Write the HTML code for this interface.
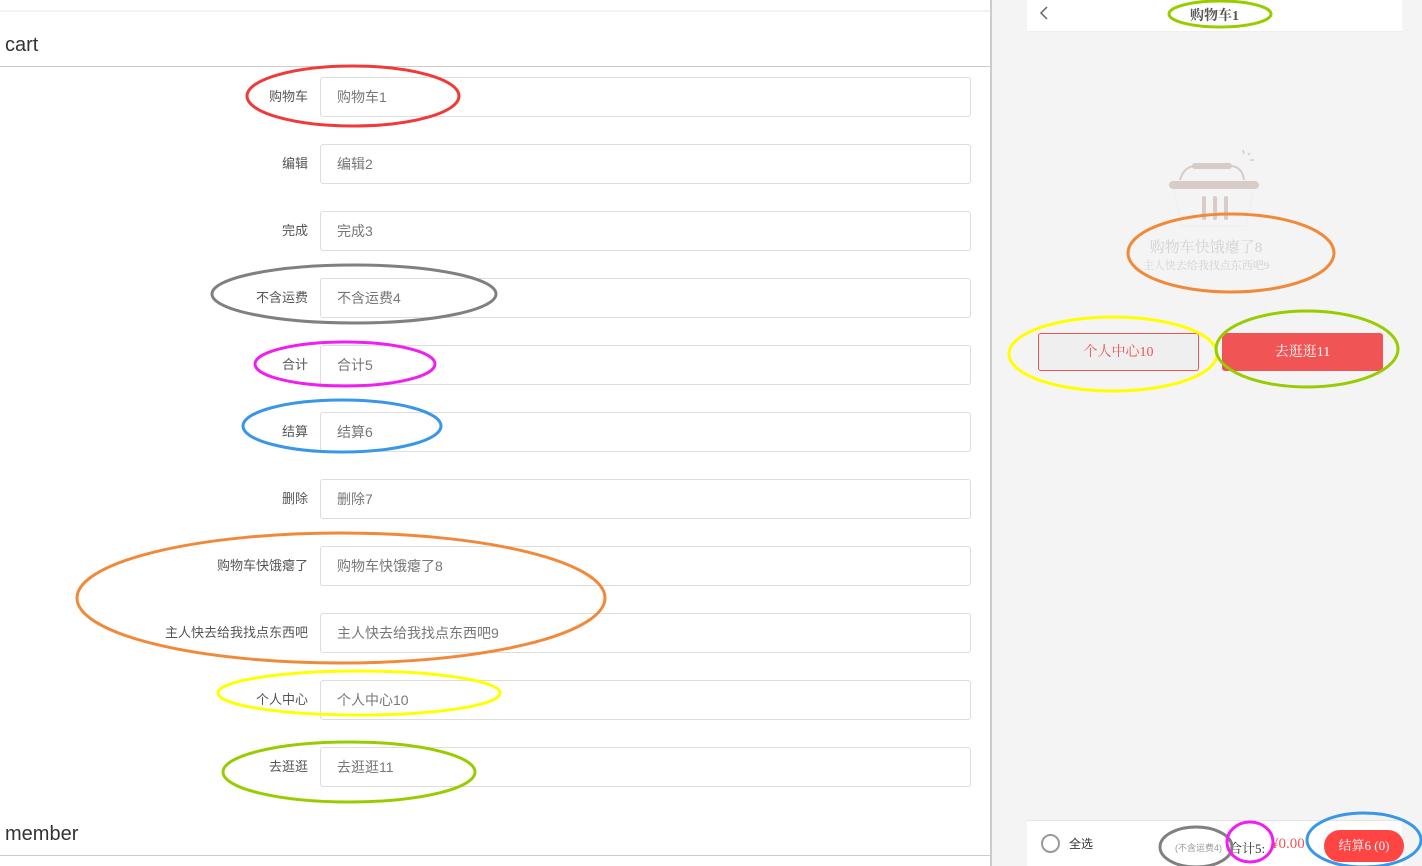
<!DOCTYPE html>
<html><head><meta charset="utf-8"><style>
*{margin:0;padding:0;box-sizing:border-box}
body{width:1422px;height:866px;overflow:hidden;background:#fff;font-family:"Liberation Sans","Noto Sans CJK SC",sans-serif;position:relative}
.topline{position:absolute;left:0;top:10px;width:990px;height:2px;background:#f2f2f2}
.h{position:absolute;left:5px;font-size:20px;color:#333}
.hr{position:absolute;left:0;width:990px;height:1px;background:#ccc}
.lbl{position:absolute;right:1114px;font-size:13px;color:#555;line-height:40px;white-space:nowrap}
.inp{position:absolute;left:320px;width:651px;height:40px;border:1px solid #ddd;border-radius:3px;font-size:14px;color:#777;line-height:38px;padding-left:16px}
.right{position:absolute;left:990px;top:0;width:432px;height:866px;background:#f4f4f4;border-left:2px solid #ccc}
.nav{position:absolute;left:35px;top:0;width:375px;height:32px;background:#fff;border-bottom:1px solid #eee}
.title{position:absolute;left:0;width:375px;top:5px;text-align:center;font-family:"Liberation Serif","Noto Serif CJK SC",serif;font-weight:bold;font-size:14px;color:#555}
.t1{position:absolute;width:432px;left:0;text-align:center;font-family:"Liberation Serif","Noto Serif CJK SC",serif;color:#d2d2d2}
.btn{position:absolute;top:333px;height:38px;border-radius:3px;font-family:"Liberation Serif","Noto Serif CJK SC",serif;font-size:14px;line-height:40px;text-align:center}
.foot{position:absolute;left:35px;top:820px;width:375px;height:46px;background:#fff;border-top:1px solid #e5e5e5}
svg.ov{position:absolute;left:0;top:0}
</style></head><body>
<div class="topline"></div>
<div class="h" style="top:34px">cart</div>
<div class="hr" style="top:66px"></div>
<div class="lbl" style="top:77px">购物车</div><div class="inp" style="top:77px">购物车1</div>
<div class="lbl" style="top:144px">编辑</div><div class="inp" style="top:144px">编辑2</div>
<div class="lbl" style="top:211px">完成</div><div class="inp" style="top:211px">完成3</div>
<div class="lbl" style="top:278px">不含运费</div><div class="inp" style="top:278px">不含运费4</div>
<div class="lbl" style="top:345px">合计</div><div class="inp" style="top:345px">合计5</div>
<div class="lbl" style="top:412px">结算</div><div class="inp" style="top:412px">结算6</div>
<div class="lbl" style="top:479px">删除</div><div class="inp" style="top:479px">删除7</div>
<div class="lbl" style="top:546px">购物车快饿瘪了</div><div class="inp" style="top:546px">购物车快饿瘪了8</div>
<div class="lbl" style="top:613px">主人快去给我找点东西吧</div><div class="inp" style="top:613px">主人快去给我找点东西吧9</div>
<div class="lbl" style="top:680px">个人中心</div><div class="inp" style="top:680px">个人中心10</div>
<div class="lbl" style="top:747px">去逛逛</div><div class="inp" style="top:747px">去逛逛11</div>
<div class="h" style="top:823px">member</div>
<div class="hr" style="top:855px"></div>

<div class="right">
 <div class="nav">
  <svg style="position:absolute;left:12px;top:6px" width="10" height="14"><path d="M8 1 L2 7 L8 13" stroke="#666" stroke-width="1.5" fill="none"/></svg>
  <div class="title">购物车1</div>
 </div>
 <svg style="position:absolute;left:174px;top:146px" width="95" height="85">
  <path d="M77 4 l1 4 M82 9 l2 -2 M84 14 l4 0" stroke="#d8ccc8" stroke-width="1.5"/>
  <path d="M14 34 Q18 20 30 20 L64 20 Q76 20 78 34" stroke="#d8ccc8" stroke-width="2" fill="none"/>
  <rect x="26" y="17" width="40" height="6" rx="3" fill="#d8ccc8"/>
  <rect x="3" y="35" width="90" height="8" rx="4" fill="#d8ccc8"/>
  <path d="M8 43 L16 80 L80 80 L88 43" stroke="#eee" fill="none"/>
  <rect x="36" y="50" width="4" height="24" rx="2" fill="#d8ccc8"/>
  <rect x="47" y="50" width="4" height="24" rx="2" fill="#d8ccc8"/>
  <rect x="58" y="50" width="4" height="24" rx="2" fill="#d8ccc8"/>
 </svg>
 <div class="t1" style="top:236px;font-size:15px;left:-2px">购物车快饿瘪了8</div>
 <div class="t1" style="top:257px;font-size:11px;left:-2px">主人快去给我找点东西吧9</div>
 <div class="btn" style="left:46px;width:161px;border:1px solid #f05454;background:#efefef;color:#f05454;line-height:38px">个人中心10</div>
 <div class="btn" style="left:230px;width:161px;background:#f05454;color:#fff">去逛逛11</div>
 <div class="foot">
  <div style="position:absolute;left:14px;top:13px;width:19px;height:19px;border:2px solid #999;border-radius:50%"></div>
  <div style="position:absolute;left:42px;top:14px;font-size:12px;color:#333">全选</div>
  <div style="position:absolute;left:148px;top:20px;font-size:9px;color:#999">(不含运费4)</div>
  <div style="position:absolute;left:202px;top:17px;font-size:13px;color:#333;font-family:'Liberation Serif','Noto Serif CJK SC',serif">合计5:</div>
  <div style="position:absolute;left:244px;top:15px;font-size:15px;color:#f05454;font-family:'Liberation Serif',serif">¥0.00</div>
  <div style="position:absolute;left:297px;top:9px;width:80px;height:32px;border-radius:16px;background:#f44;color:#fff;font-size:13px;line-height:32px;text-align:center;font-family:'Liberation Serif','Noto Serif CJK SC',serif">结算6 (0)</div>
 </div>
</div>

<svg class="ov" width="1422" height="866" fill="none" stroke-width="3">
 <ellipse cx="353" cy="96" rx="106" ry="30" stroke="#f03a3a"/>
 <ellipse cx="354" cy="294" rx="142" ry="29" stroke="#808080"/>
 <ellipse cx="345" cy="364" rx="90" ry="22" stroke="#f01ef0"/>
 <ellipse cx="342" cy="426" rx="99" ry="26" stroke="#3a96e6"/>
 <ellipse cx="341" cy="598" rx="264" ry="65" stroke="#f08a3a"/>
 <ellipse cx="359" cy="693" rx="141" ry="22" stroke="#ffff00"/>
 <ellipse cx="349" cy="772" rx="126" ry="30" stroke="#99cc00"/>
 <ellipse cx="1220" cy="14" rx="51" ry="13" stroke="#99cc00"/>
 <ellipse cx="1231" cy="253" rx="103" ry="39" stroke="#f08a3a"/>
 <ellipse cx="1113" cy="354" rx="104" ry="37" stroke="#ffff00"/>
 <ellipse cx="1307" cy="349" rx="91" ry="38" stroke="#99cc00"/>
 <ellipse cx="1196" cy="847" rx="36" ry="20" stroke="#808080"/>
 <ellipse cx="1250" cy="842" rx="23" ry="20" stroke="#f01ef0"/>
 <ellipse cx="1364" cy="840" rx="57" ry="27" stroke="#3a96e6"/>
</svg>
</body></html>
